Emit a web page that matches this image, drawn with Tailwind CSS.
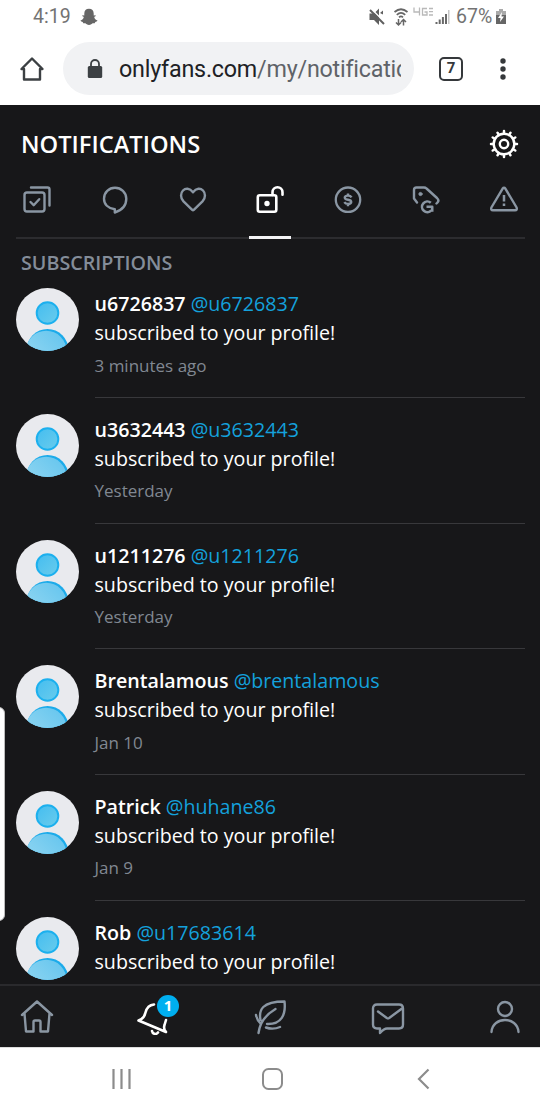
<!DOCTYPE html>
<html lang="en">
<head>
<meta charset="utf-8">
<title>Notifications</title>
<script src="https://cdn.jsdelivr.net/npm/@tailwindcss/browser@4"></script>
</head>
<body class="relative flex h-[1110px] w-[540px] flex-col overflow-hidden bg-white font-['Open_Sans','Noto_Sans',sans-serif]">

<!-- status bar -->
<div class="flex h-8 shrink-0 items-center pl-[33px] pt-[1px] font-[Roboto,sans-serif] text-[19.500px] text-[#737373]">
  <span class="w-[38px] whitespace-nowrap leading-8">4:19</span>
  <svg class="ml-[9px]" width="18" height="18" viewBox="0 0 18 18" fill="#666"><path d="M9 .8c3 0 4.700 2 4.700 4.700v2l1.800-.3c.7.500-.3 1.300-1.300 1.700.4 2 1.500 3 3.300 3.500-.1 1-1.600 1.200-2.200 1.500l-.6 1.400c-2-.3-2.700.2-3.500 1-1.400 1-3 1-4.400 0-.8-.8-1.500-1.300-3.500-1l-.6-1.400C2 13.600.6 13.400.5 12.400c1.800-.5 2.900-1.500 3.300-3.500-1-.4-2-1.200-1.300-1.700l1.800.3v-2C4.300 2.800 6 .8 9 .8z"/></svg>
  <svg class="ml-[270px]" width="18" height="18" viewBox="0 0 18 18" fill="#5f5f5f"><path d="M1.500 5.500H6l5-5V17l-5-5H1.500z"/><path d="M12 5l3-2.500v4z"/><path d="M3.200.8l14 14" stroke="#fff" stroke-width="1.500"/><path d="M2 2l14 14" stroke="#5f5f5f" stroke-width="2"/></svg>
  <svg class="ml-[7px]" width="16" height="20" viewBox="0 0 16 20" fill="none" stroke="#666" stroke-width="1.700"><path d="M1.500 5q6.500-5.500 13 0M3.800 7.800q4.200-4 8.400 0M6 10.300q2-1.800 4 0"/><path d="M5.500 12v6M3 15.500L5.500 18 8 15.500M10.500 18.500v-6M8 15l2.500-2.500L13 15" stroke-width="1.500"/></svg>
  <svg class="mb-[9px] ml-[3px]" width="22" height="12" viewBox="0 0 22 12" fill="none" stroke="#b9b9b9" stroke-width="1.300"><path d="M2 1.500v4.500h6M7.500 1.500v8M15 2.500h-4.500v6.500H15V6h-2.500M17 2.500h4M17 5.700h4M17 9h4"/></svg>
  <svg class="ml-[1px]" width="16" height="16" viewBox="0 0 16 16" fill="#696969"><path d="M.5 13h2v2h-2zM3.700 10.500h2V15h-2zM6.900 8h2v7h-2zM10 5h2v10h-2z"/><path d="M13 1h1.500v14H13z" fill="#c7c7c7"/></svg>
  <span class="ml-[5px] w-[37px] whitespace-nowrap leading-8">67%</span>
  <svg class="ml-[2px]" width="12" height="17" viewBox="0 0 12 17"><path d="M4 1h4v2h3v13H1V3h3z" fill="#aaa"/><path d="M1 7h10v9H1z" fill="#666"/><path d="M7 4L3 10h2.500L5 14l4-5.500H6.500z" fill="#fff"/></svg>
</div>

<!-- browser toolbar -->
<div class="flex h-[73px] shrink-0 items-center pl-[18px] font-[Roboto,sans-serif]">
  <svg width="28" height="28" viewBox="0 0 28 28" fill="none" stroke="#3c4043" stroke-width="2.400" stroke-linejoin="round" stroke-linecap="round"><path d="M3.500 14L14 3.500 24.500 14H22v10.500H6V14z"/></svg>
  <div class="ml-[17px] flex h-[53px] w-[351px] items-center rounded-full bg-[#f1f2f4] pl-[24px]">
    <svg width="16" height="20" viewBox="0 0 16 20"><rect x=".8" y="7" width="14.400" height="12" rx="1.500" fill="#3c4043"/><path d="M4 8V5a4 4 0 0 1 8 0v3" fill="none" stroke="#3c4043" stroke-width="1.800"/></svg>
    <div class="ml-[16px] w-[282px] overflow-hidden whitespace-nowrap pt-[1px] text-[23.300px] leading-8 tracking-[-0.220px] text-[#5f6368]"><span class="text-[#202124]">onlyfans.com</span>/my/notificatic</div>
  </div>
  <div class="ml-[25px] flex h-6 w-6 items-center justify-center rounded-[5px] border-[2.500px] border-[#35383b] text-[15px] font-bold text-[#35383b]">7</div>
  <svg class="ml-[36px]" width="8" height="24" viewBox="0 0 8 24" fill="#35383b"><circle cx="4" cy="4" r="2.700"/><circle cx="4" cy="12" r="2.700"/><circle cx="4" cy="20" r="2.700"/></svg>
</div>

<!-- page -->
<main class="flex h-[942px] shrink-0 flex-col overflow-hidden bg-[#171719] text-white">
  <header class="flex h-[78px] shrink-0 items-center justify-between px-[21px]">
    <h1 class="pt-[1px] text-[23.700px] font-semibold leading-none">NOTIFICATIONS</h1>
    <svg width="30" height="30" viewBox="0 0 30 30" fill="none" stroke="#fff" stroke-width="2.400"><circle cx="15" cy="15" r="10.300"/><circle cx="15" cy="15" r="4.200"/><path stroke-width="2.500" stroke-linecap="round" d="M15 4V2M15 26v2M4 15H2M26 15h2M9.500 5.470l-1-1.730M20.500 5.470l1-1.730M5.470 9.500l-1.730-1M24.530 9.500l1.730-1M5.470 20.500l-1.730 1M24.530 20.500l1.730 1M9.500 24.530l-1 1.730M20.500 24.530l1 1.730"/></svg>
  </header>
  <nav class="ml-4 mr-[15px] flex h-[56px] shrink-0 justify-between border-b-2 border-[#2c2c2f] text-[#8a96a3]">
    <div class="flex w-[42px] justify-center pt-[1px]"><svg width="30" height="30" viewBox="0 0 30 30" fill="none" stroke="currentColor" stroke-width="2.400" stroke-linecap="round" stroke-linejoin="round"><rect x="2.500" y="8.500" width="20" height="19" rx="2.500"/><path d="M9 3.500h16.500q2 0 2 2v16M8.500 18l3.200 3.200 5.500-6"/></svg></div>
    <div class="flex w-[42px] justify-center pt-[1px]"><svg width="30" height="30" viewBox="0 0 30 30" fill="none" stroke="currentColor" stroke-width="2.400" stroke-linejoin="round"><path d="M14.800 25.300C8 24.300 4 20.300 4 14.800 4 8.300 9 3.800 15 3.800S26.300 8.300 26.300 14.800c0 6.500-4.500 11.500-11.500 13.700z"/></svg></div>
    <div class="flex w-[42px] justify-center pt-[1px]"><svg width="30" height="30" viewBox="0 0 30 30" fill="none" stroke="currentColor" stroke-width="2.400" stroke-linejoin="round"><path d="M14.200 25.900L5.500 17.400C-1.500 9.700 8-.8 15 8.200c7-9 16.500 1.500 9.500 9.200l-8.700 8.500q-.8.700-1.600 0z"/></svg></div>
    <div class="flex h-[56px] w-[42px] justify-center border-b-[3px] border-[#f3f3f5] pt-[1px] text-white"><svg width="30" height="30" viewBox="0 0 30 30" fill="none" stroke="currentColor" stroke-width="2.600" stroke-linecap="round" stroke-linejoin="round"><rect x="2.800" y="11.200" width="18.500" height="16.500" rx="2"/><path d="M17.500 11V8.200a5 5 0 0 1 10 0v2.500"/><circle cx="12" cy="19.500" r="1.400" fill="currentColor"/></svg></div>
    <div class="flex w-[42px] justify-center pt-[1px]"><svg width="30" height="30" viewBox="0 0 30 30" fill="none" stroke="currentColor" stroke-width="2.300"><circle cx="15" cy="15.700" r="12.200"/><path stroke-width="2.400" d="M18.500 13.400q-1-1.800-3.500-1.800c-4.300 0-4.300 3.600 0 4.100s4.300 4.200 0 4.200q-2.500 0-3.700-1.800M15 9.400v2.500M15 19.700v2.500"/></svg></div>
    <div class="flex w-[42px] justify-center pt-[1px]"><svg width="30" height="30" viewBox="0 0 30 30" fill="none" stroke="currentColor" stroke-width="2.400" stroke-linecap="round" stroke-linejoin="round"><path d="M6 18.500L3 14.500V6Q3 3.500 5.500 3.500h7.500q1.500 0 2.500 1l10.500 9.500q2.500 2.500.5 4.500l-1 1"/><circle cx="9.500" cy="10" r="1.600" fill="currentColor" stroke-width="1"/><path d="M19.800 18.800a5.300 5.300 0 1 0 .5 7.500M15.500 22.700h5.700v5" stroke-width="2.600" stroke-linecap="butt"/></svg></div>
    <div class="flex w-[42px] justify-center pt-[1px]"><svg width="30" height="30" viewBox="0 0 30 30" fill="none" stroke="currentColor" stroke-width="2.400" stroke-linejoin="round"><path d="M13.500 4.800q1.500-2 3 0L27.600 23.500q.8 2.800-1.500 2.800H3.900q-2.300 0-1.500-2.800z"/><path stroke-width="2.500" d="M15 11v6.500M15 19.500V22"/></svg></div>
  </nav>
  <h2 class="ml-[21px] mt-[11px] h-[38.200px] shrink-0 text-[19.700px] font-semibold leading-[26px] text-[#848d99]">SUBSCRIPTIONS</h2>
  <section id="list" class="flex h-[695.800px] shrink-0 flex-col overflow-hidden"></section>
  <footer class="flex grow items-start justify-between border-t-2 border-[#2a2a2d] bg-[#19191b] pl-[19px] pr-[17px] pt-[13px] text-[#8a96a3]">
    <svg width="36" height="36" viewBox="0 0 36 36" fill="none" stroke="currentColor" stroke-width="2.400" stroke-linejoin="round" stroke-linecap="round"><path d="M3 16L18 2.500 33 16M5.500 14.500L7 32.500h7.500V23q0-1.500 1.500-1.500h4q1.500 0 1.500 1.500v9.500H29l1.500-18"/></svg>
    <div class="relative">
      <svg width="36" height="36" viewBox="0 0 36 36" fill="none" stroke="#fff" stroke-width="2.600" stroke-linejoin="round" stroke-linecap="round"><path d="M18 5.500c-5 .5-7.500 4-8.500 8C8.500 18 7 20 2.500 21.500L30 33q-2.800-3-1.500-7l1.500-5M16 32c.5 3 4 4 6 1.500"/></svg>
      <span class="absolute left-[21px] top-[-4px] flex h-[22px] w-[22px] items-center justify-center rounded-full bg-[#00aff0] text-[15px] font-bold leading-none text-white">1</span>
    </div>
    <svg width="36" height="36" viewBox="0 0 36 36" fill="none" stroke="currentColor" stroke-width="2.400" stroke-linejoin="round" stroke-linecap="round"><path d="M7.500 21C5.500 11 9 2.500 31.500 2.500c1.500 13-3 23-17.500 22.500M22.500 10C14 15 7 22 5.500 34M3 16q1 5 4.500 8.500M27 28q-7 3-14 .5"/></svg>
    <svg width="36" height="36" viewBox="0 0 36 36" fill="none" stroke="currentColor" stroke-width="2.400" stroke-linejoin="round" stroke-linecap="round"><path d="M7 5.500h22q4 0 4 4v16q0 4-4 4H17q-3 0-7 4.500v-4.500H7q-4 0-4-4v-16q0-4 4-4zM8 12.500l8.800 6.500q1.200.7 2.400 0L32 9.500"/></svg>
    <svg width="36" height="36" viewBox="0 0 36 36" fill="none" stroke="currentColor" stroke-width="2.400" stroke-linecap="round"><circle cx="18" cy="10" r="7"/><path d="M4.500 33c1-16 26-16 27 0"/></svg>
  </footer>
</main>

<!-- system navigation -->
<div class="flex grow items-center border-t border-[#ddd] pb-[1px] pl-[111px]">
  <svg width="22" height="22" viewBox="0 0 22 22" stroke="#8c8c8c" stroke-width="2.200"><path d="M2.500 1v20M10.500 1v20M18.500 1v20"/></svg>
  <svg class="ml-[128px]" width="24" height="24" viewBox="0 0 24 24" fill="none" stroke="#8c8c8c" stroke-width="2"><rect x="2" y="2" width="19" height="20" rx="5.500"/></svg>
  <svg class="ml-[131px]" width="16" height="22" viewBox="0 0 16 22" fill="none" stroke="#8c8c8c" stroke-width="2.200"><path d="M12.500 1.500L3 11l9.500 9.500"/></svg>
</div>

<!-- edge panel handle -->
<div class="absolute left-[-9px] top-[707px] h-[214px] w-[14px] rounded-[6px] border border-[#bbb] bg-white"></div>

<svg width="0" height="0" class="absolute">
  <defs>
    <linearGradient id="headFill" x1="0" y1="0" x2="1" y2="1"><stop stop-color="#44bdf0"/><stop offset="1" stop-color="#6accec"/></linearGradient>
    <linearGradient id="bodyFill" x1="0" y1="1" x2="1" y2="0"><stop stop-color="#9bdaf2"/><stop offset="1" stop-color="#62c4ee"/></linearGradient>
    <clipPath id="disc"><circle cx="31.500" cy="31.500" r="31.500"/></clipPath>
    <symbol id="avatar" viewBox="0 0 63 63"><g clip-path="url(#disc)"><path fill="#e9eaee" d="M0 0h63v63H0z"/><circle cx="31.500" cy="25" r="10.800" fill="url(#headFill)" stroke="#1cb0ee" stroke-width="2"/><circle cx="31.500" cy="62" r="21" fill="#1cabea"/><circle cx="30.200" cy="63" r="20.300" fill="url(#bodyFill)"/></g></symbol>
  </defs>
</svg>
<script>
  const rows = [
    ['u6726837', '@u6726837', '3 minutes ago'],
    ['u3632443', '@u3632443', 'Yesterday'],
    ['u1211276', '@u1211276', 'Yesterday'],
    ['Brentalamous', '@brentalamous', 'Jan 10'],
    ['Patrick', '@huhane86', 'Jan 9'],
    ['Rob', '@u17683614', '']
  ];
  document.getElementById('list').innerHTML = rows.map(([name, handle, time]) => `
    <article class="flex h-[125.700px] shrink-0 gap-[15.500px] pl-4 pr-[15px]">
      <svg class="shrink-0" width="63" height="63"><use href="#avatar"/></svg>
      <div class="h-[109.800px] grow whitespace-nowrap border-b border-[#38383b] pt-[1px] text-[19.650px] leading-[29px]">
        <p><span class="font-semibold">${name}</span> <span class="text-[#14a1dc]">${handle}</span></p>
        <p>subscribed to your profile!</p>
        <p class="pt-[6.500px] text-[17px] leading-[24px] text-[#818892]">${time}</p>
      </div>
    </article>`).join('');
</script>
</body>
</html>
